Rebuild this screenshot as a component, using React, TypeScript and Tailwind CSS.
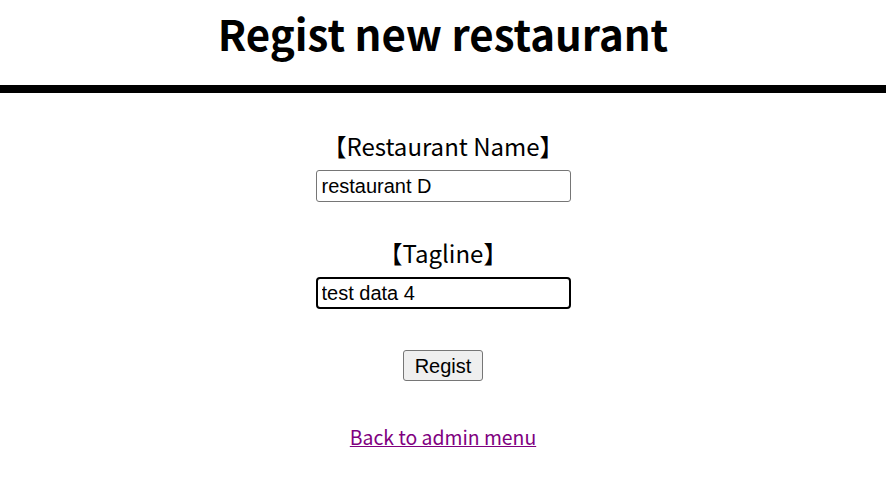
import React from 'react';

const font = { fontFamily: '"Noto Sans CJK JP", "Noto Sans", sans-serif' };
const inputFont = { fontFamily: '"Liberation Sans", Arial, sans-serif' };

export default function App() {
  return (
    <div className="min-h-screen bg-white text-black" style={font}>
      <header className="border-b-[8px] border-black">
        <h1 className="text-center text-[42px] font-bold leading-[66px] pb-[19px]">Regist new restaurant</h1>
      </header>
      <form className="flex flex-col items-center pt-[29px]">
        <label className="text-[24px] leading-[48px]">【Restaurant Name】</label>
        <input
          defaultValue="restaurant D"
          className="w-[255px] h-[32px] border border-[#767676] rounded-[3px] px-[5px] text-[20px] outline-none"
          style={inputFont}
        />
        <label className="text-[24px] leading-[48px] mt-[27px]">【Tagline】</label>
        <input
          defaultValue="test data 4"
          className="w-[255px] h-[32px] border-2 border-black rounded-[4px] px-[4px] text-[20px] outline-none"
          style={inputFont}
        />
        <button
          type="button"
          className="mt-[41px] w-[80px] h-[31px] bg-[#efefef] border border-[#767676] rounded-[3px] text-[20px]"
          style={inputFont}
        >
          Regist
        </button>
        <a href="#" className="mt-[41px] text-[19.4px] text-[#800080] underline leading-[30px]">
          Back to admin menu
        </a>
      </form>
    </div>
  );
}
